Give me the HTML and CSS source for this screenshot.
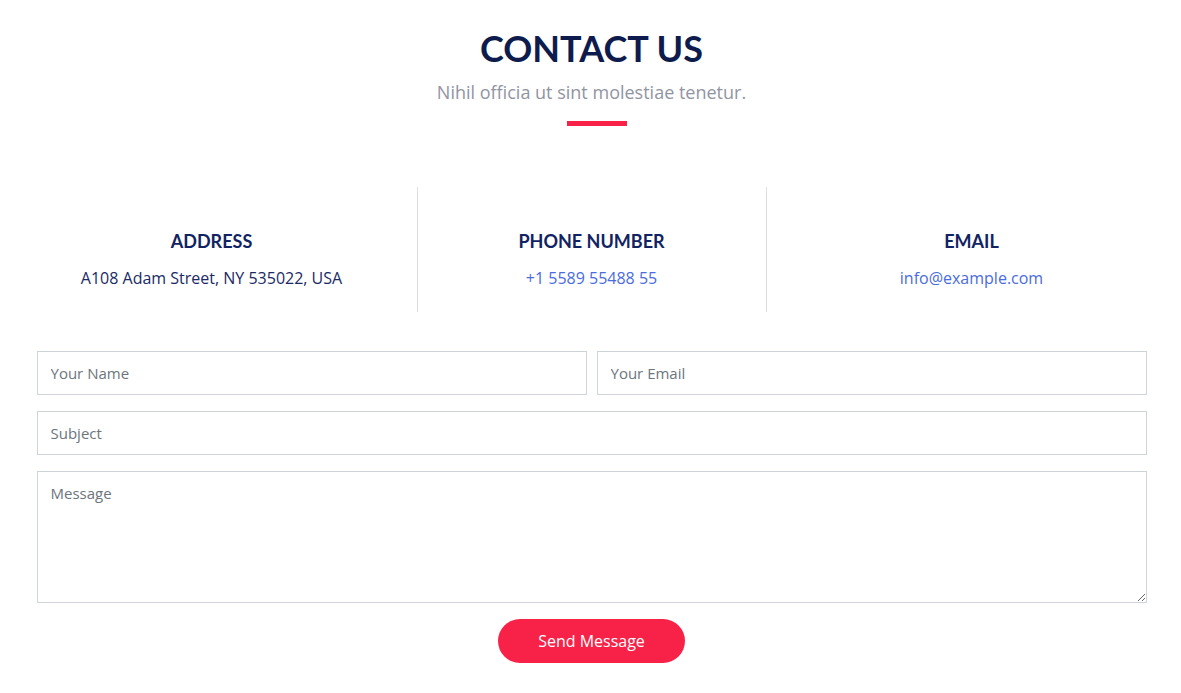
FILE: index.html
```html
<!DOCTYPE html>
<html lang="en">
<head>
<meta charset="utf-8">
<title>Contact Us</title>
<link rel="stylesheet" href="styles.css">
</head>
<body>
<section class="contact">
  <div class="container">
    <div class="section-header">
      <h2 class="section-title">Contact Us</h2>
      <p class="section-sub">Nihil officia ut sint molestiae tenetur.</p>
      <span class="section-bar"></span>
    </div>

    <div class="info-row">
      <div class="info-col">
        <div class="info-box">
          <h3 class="info-title">Address</h3>
          <address class="info-text">A108 Adam Street, NY 535022, USA</address>
        </div>
      </div>
      <div class="info-col">
        <div class="info-box info-box-mid">
          <h3 class="info-title">Phone Number</h3>
          <p class="info-text"><a class="info-link" href="#">+1 5589 55488 55</a></p>
        </div>
      </div>
      <div class="info-col">
        <div class="info-box">
          <h3 class="info-title">Email</h3>
          <p class="info-text"><a class="info-link" href="#">info@example.com</a></p>
        </div>
      </div>
    </div>

    <form class="contact-form">
      <div class="form-row">
        <input class="form-control" type="text" placeholder="Your Name">
        <input class="form-control" type="email" placeholder="Your Email">
      </div>
      <div class="form-group">
        <input class="form-control" type="text" placeholder="Subject">
      </div>
      <div class="form-group">
        <textarea class="form-control form-textarea" placeholder="Message"></textarea>
      </div>
      <div class="form-actions">
        <button class="btn-send" type="submit">Send Message</button>
      </div>
    </form>
  </div>
</section>
</body>
</html>
```
FILE: styles.css
```css
* { box-sizing: border-box; }

html, body {
  margin: 0;
  padding: 0;
  background: #fff;
}

body {
  font-family: "Open Sans", "Liberation Sans", sans-serif;
  color: #2f3138;
  font-size: 16px;
}

.contact {
  padding: 27px 0 30px 2px;
}

.container {
  width: 1110px;
  margin: 0 auto;
}

.section-header {
  display: flex;
  flex-direction: column;
  align-items: center;
  margin-bottom: 61px;
}

.section-title {
  margin: 0;
  font-family: "Lato", "Liberation Sans", sans-serif;
  font-weight: 700;
  font-size: 36px;
  line-height: 42px;
  text-transform: uppercase;
  color: #0e1b4d;
}

.section-sub {
  margin: 10px 0 0;
  font-size: 18px;
  line-height: 27px;
  color: #9195a2;
}

.section-bar {
  display: block;
  width: 60px;
  height: 5px;
  margin: 15px 0 0 10px;
  background: #f82249;
}

.info-row {
  display: grid;
  grid-template-columns: 380px 380px 380px;
  margin: 0 -15px 39px;
}

.info-col {
  padding: 0 15px;
}

.info-box {
  height: 125px;
  padding-top: 43px;
  text-align: center;
}

.info-box-mid {
  border-left: 1px solid #ddd;
  border-right: 1px solid #ddd;
}

.info-title {
  margin: 0 0 14px;
  font-family: "Lato", "Liberation Sans", sans-serif;
  font-weight: 700;
  font-size: 18px;
  line-height: 22px;
  text-transform: uppercase;
  color: #112363;
}

.info-text {
  margin: 0;
  font-style: normal;
  font-size: 16px;
  line-height: 24px;
  color: #1a2a66;
}

.info-link {
  color: #4a6ce0;
  text-decoration: none;
}

.contact-form {
  display: flex;
  flex-direction: column;
  gap: 16px;
}

.form-row {
  display: grid;
  grid-template-columns: 1fr 1fr;
  gap: 10px;
}

.form-control {
  display: block;
  width: 100%;
  height: 44px;
  margin: 0;
  padding: 0 13px;
  font-family: "Open Sans", "Liberation Sans", sans-serif;
  font-size: 15px;
  color: #495057;
  background: #fff;
  border: 1px solid #ced4da;
  border-radius: 0;
  outline: none;
}

.form-control::placeholder {
  color: #6c757d;
  opacity: 1;
}

.form-textarea {
  height: 132px;
  padding: 10px 13px;
  line-height: 22px;
  resize: vertical;
}

.form-actions {
  display: flex;
  justify-content: center;
}

.btn-send {
  height: 44px;
  padding: 0 40px;
  font-family: "Open Sans", "Liberation Sans", sans-serif;
  font-size: 16px;
  color: #fff;
  background: #f82249;
  border: 0;
  border-radius: 50px;
  cursor: pointer;
}
```
